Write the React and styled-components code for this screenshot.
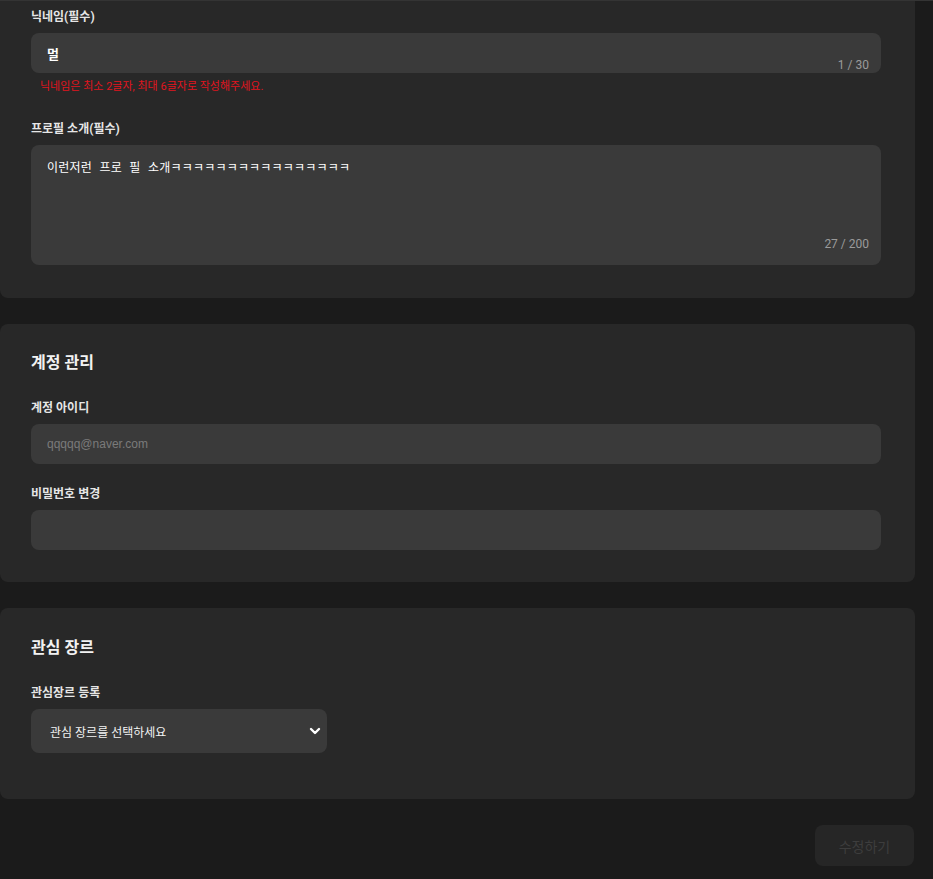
import React from 'react'
import styled, { createGlobalStyle } from 'styled-components'

const GlobalStyle = createGlobalStyle`
  * { box-sizing: border-box; }
  body {
    margin: 0;
    background: #1b1b1b;
    font-family: Roboto, "Noto Sans CJK KR", sans-serif;
    color: #ececec;
  }
`;

const Page = styled.div`
  display: flex;
  flex-direction: column;
  gap: 26px;
  padding-right: 18px;
  padding-bottom: 13px;
  border-top: 1px solid #343434;
`;

const Card = styled.section`
  display: flex;
  flex-direction: column;
  background: #282828;
  border-radius: ${p => (p.$cut ? '0 0 8px 8px' : '8px')};
  padding: ${p => p.$pad};
`;

const Title = styled.h2`
  margin: 0 0 26px;
  font-size: 16px;
  line-height: 22px;
  font-weight: 700;
  color: #f2f2f2;
`;

const Label = styled.label`
  display: block;
  font-size: 12px;
  line-height: 16px;
  font-weight: 700;
  color: #e6e6e6;
  margin-bottom: 8px;
`;

const Field = styled.div`
  display: flex;
  flex-direction: column;
  margin-top: ${p => p.$top || 0}px;
`;

const Box = styled.div`
  position: relative;
  height: ${p => p.$h}px;
  background: #3a3a3a;
  border-radius: 8px;
  padding: ${p => (p.$area ? '15px 16px' : '0 16px')};
  display: flex;
  align-items: ${p => (p.$area ? 'flex-start' : 'center')};
`;

const Value = styled.span`
  font-size: 13px;
  font-weight: 700;
  color: #ffffff;
`;

const AreaText = styled.span`
  font-family: "DejaVu Sans Mono", "Noto Sans CJK KR", monospace;
  font-size: 12px;
  line-height: 16px;
  letter-spacing: 0.2px;
  color: #ffffff;
`;

const Placeholder = styled.span`
  font-family: "Liberation Sans", Arial, sans-serif;
  font-size: 12px;
  color: #7a7a7a;
`;

const Counter = styled.span`
  position: absolute;
  right: 12px;
  bottom: ${p => p.$b}px;
  font-size: 12px;
  color: #9a9a9a;
`;

const Error = styled.p`
  margin: 7px 0 0 9px;
  font-size: 11px;
  line-height: 14px;
  color: #e0141e;
`;

const Select = styled.div`
  width: 296px;
  height: 44px;
  background: #3a3a3a;
  border-radius: 8px;
  display: flex;
  align-items: center;
  justify-content: space-between;
  padding: 0 6px 0 19px;
  font-size: 12px;
  color: #f4f4f4;
`;

const Footer = styled.div`
  display: flex;
  justify-content: flex-end;
`;

const Submit = styled.button`
  width: 99px;
  height: 41px;
  border: none;
  border-radius: 8px;
  background: #262626;
  color: #3d3d3d;
  font-family: Roboto, "Noto Sans CJK KR", sans-serif;
  font-size: 14px;
  margin-right: 1px;
`;

function Chevron() {
  return (
    <svg width="12" height="8" viewBox="0 0 12 8">
      <polyline points="2,2 6,6 10,2" fill="none" stroke="#fff" strokeWidth="2.4" strokeLinecap="round" strokeLinejoin="round" />
    </svg>
  )
}

export default function App() {
  return (
    <>
      <GlobalStyle />
      <Page>
        <Card $cut $pad="8px 34px 33px 31px">
          <Field>
            <Label>닉네임(필수)</Label>
            <Box $h={40}>
              <Value>멀</Value>
              <Counter $b={1}>1 / 30</Counter>
            </Box>
            <Error>닉네임은 최소 2글자, 최대 6글자로 작성해주세요.</Error>
          </Field>
          <Field $top={27}>
            <Label>프로필 소개(필수)</Label>
            <Box $h={120} $area>
              <AreaText>이런저런 프로 필 소개ㅋㅋㅋㅋㅋㅋㅋㅋㅋㅋㅋㅋㅋㅋㅋㅋ</AreaText>
              <Counter $b={14}>27 / 200</Counter>
            </Box>
          </Field>
        </Card>

        <Card $pad="28px 34px 32px 31px">
          <Title>계정 관리</Title>
          <Field>
            <Label>계정 아이디</Label>
            <Box $h={40}>
              <Placeholder>qqqqq@naver.com</Placeholder>
            </Box>
          </Field>
          <Field $top={22}>
            <Label>비밀번호 변경</Label>
            <Box $h={40} />
          </Field>
        </Card>

        <Card $pad="29px 34px 46px 31px">
          <Title>관심 장르</Title>
          <Field>
            <Label>관심장르 등록</Label>
            <Select>
              <span>관심 장르를 선택하세요</span>
              <Chevron />
            </Select>
          </Field>
        </Card>

        <Footer>
          <Submit>수정하기</Submit>
        </Footer>
      </Page>
    </>
  )
}
